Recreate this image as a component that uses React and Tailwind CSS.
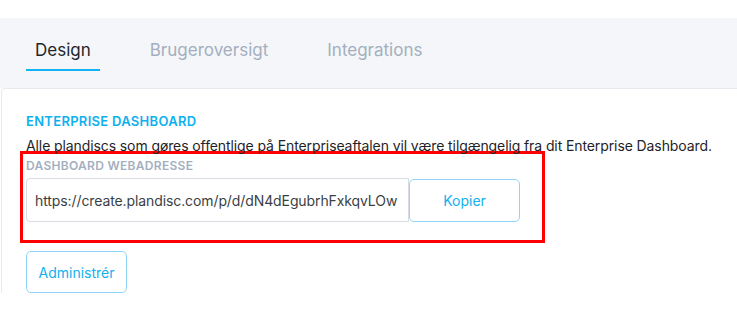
import React from 'react';

const tabs = ['Design', 'Brugeroversigt', 'Integrations'];

export default function App() {
    const url = 'https://create.plandisc.com/p/d/dN4dEgubrhFxkqvLOw';

    return (
        <div className="w-[737px] h-[328px] overflow-hidden bg-white font-['Inter',sans-serif] text-[#1f2328]">
            <div className="h-[18px]"></div>

            <div className="bg-[#f5f6f9] h-[70px] flex items-start pl-[26px] gap-[41px] pt-[21px]">
                {tabs.map((t, i) => (
                    <div
                        key={t}
                        className={`px-[9px] pb-[8px] text-[17px] leading-[22px] border-b-2 ${i === 0 ? 'border-[#12b3f2] text-[#22262b]' : 'border-transparent text-[#a3afbf]'}`}
                    >
                        {t}
                    </div>
                ))}
            </div>

            <div className="ml-px rounded-tl-[4px] border-t border-l border-[#e7eaee] bg-white pl-[24px] pt-[24px]">
                <h3 className="text-[13px] leading-[16px] font-semibold tracking-[0.3px] uppercase text-[#0fb0ee]">
                    Enterprise Dashboard
                </h3>
                <p className="mt-[7px] text-[14px] leading-[20px] tracking-[-0.1px] text-[#1f2328] whitespace-nowrap">
                    Alle plandiscs som gøres offentlige på Enterpriseaftalen vil være tilgængelig fra dit Enterprise Dashboard.
                </p>

                <div className="-ml-[6px] mt-[-5px] w-[525px] border-[3px] border-[#ff0000] pl-[3px] pt-[5px] pb-[18px]">
                    <div className="text-[12px] leading-[14px] font-semibold tracking-[0.3px] uppercase text-[#a3afbf]">
                        Dashboard webadresse
                    </div>
                    <div className="mt-[5px] flex items-center">
                        <div className="w-[383px] h-[44px] flex items-center pl-[8px] border border-[#d8dde4] rounded-l-[4px] text-[14px] tracking-[-0.1px] text-[#3a3f45] whitespace-nowrap overflow-hidden">
                            {url}
                        </div>
                        <button className="w-[111px] h-[43px] border border-[#8fd6f5] rounded-[5px] text-[14px] text-[#12b0ee] bg-white">
                            Kopier
                        </button>
                    </div>
                </div>

                <button className="mt-[8px] w-[101px] h-[42px] border border-[#8fd6f5] rounded-[5px] text-[14px] text-[#12b0ee] bg-white">
                    Administrér
                </button>
            </div>
        </div>
    );
}
